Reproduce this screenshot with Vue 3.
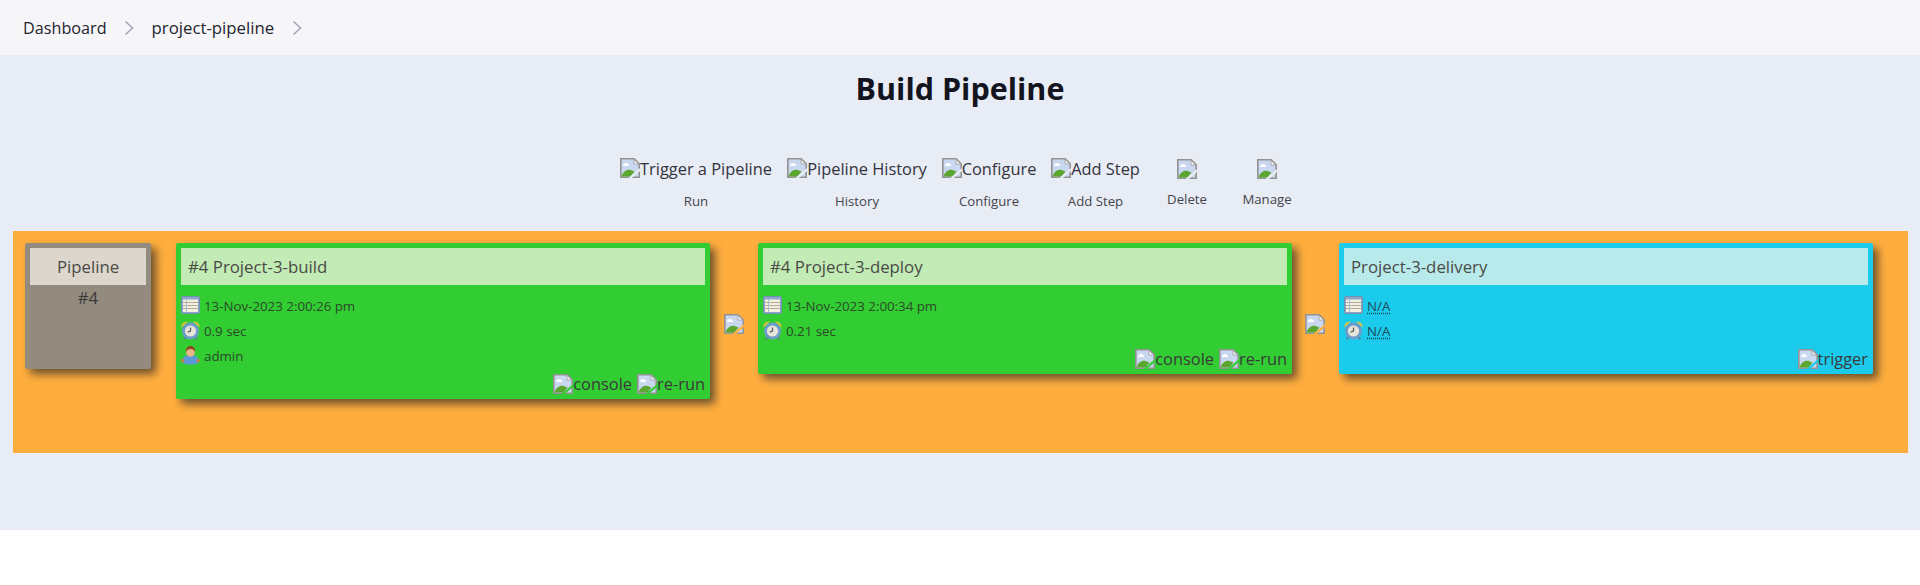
<script setup>
const tools = [
  { alt: 'Trigger a Pipeline', label: 'Run', cls: 'run' },
  { alt: 'Pipeline History', label: 'History', cls: 'history' },
  { alt: 'Configure', label: 'Configure', cls: 'configure' },
  { alt: 'Add Step', label: 'Add Step', cls: 'addstep' },
  { alt: '', label: 'Delete', cls: 'delete' },
  { alt: '', label: 'Manage', cls: 'manage' },
]
</script>

<template>
  <div class="page">
    <svg class="defs" width="0" height="0">
      <symbol id="broken" viewBox="0 0 20 20">
        <path d="M.8.8h13.400l5 5v13.400H.8z" fill="#c9d8f0" stroke="#939393" stroke-width="1.600" />
        <path d="M14 1.500v4.500h4.500z" fill="#fff" stroke="#a0a0a0" stroke-width=".9" />
        <path d="M3.500 6.500c1-2 4-2 5 0 1 .5 1 1.500 0 1.500h-5c-1 0-1-1 0-1.500z" fill="#fff" />
        <path d="M1.500 18.500c1.500-5 5.500-7.500 9-6.500l4 1.500-4 5z" fill="#5aa62e" />
        <path d="M9.500 20.500 20.500 11" stroke="var(--cut)" stroke-width="2.200" />
      </symbol>
      <symbol id="calendar" viewBox="0 0 19 19">
        <rect x=".5" y=".5" width="18" height="17" rx="1.500" fill="#8aa6cb" stroke="#7890b0" />
        <rect x="2" y="3.500" width="15" height="12.500" fill="#f3efe1" />
        <path d="M2 6.500h15M2 9.500h15M2 12.500h15" stroke="#b3ab98" stroke-width="1" />
        <path d="M5.500 3.500V16" stroke="#a9bcd6" />
      </symbol>
      <symbol id="clock" viewBox="0 0 19 19">
        <path d="M.3 6.500C.3 2.500 2.800.5 7 .5zM18.700 6.500c0-4-2.500-6-6.700-6z" fill="#e3c33a" />
        <path d="M4 16 3 18.500M15 16l1 2.500" stroke="#5f7f9f" stroke-width="2" />
        <circle cx="9.500" cy="10" r="8.500" fill="#6e9ccb" />
        <circle cx="9.500" cy="10" r="5.600" fill="#e6e6dc" />
        <path d="M9.500 6.500V10l-2.800 1.200" fill="none" stroke="#5c5c5c" stroke-width="1.300" />
      </symbol>
      <symbol id="user" viewBox="0 0 19 19">
        <path d="M1 15.500c0-4 3-6.500 8.500-6.500s8.500 2.500 8.500 6.500c0 1.800-2.500 3-8.500 3S1 17.300 1 15.500z" fill="#5c99d9" />
        <circle cx="1.800" cy="14.800" r="1.700" fill="#c2803f" />
        <circle cx="17.200" cy="14.800" r="1.700" fill="#c2803f" />
        <ellipse cx="9.500" cy="5.800" rx="4.500" ry="5" fill="#e9b48a" />
        <path d="M5 6C4.300 2.500 6.500 0 9.500 0S14.700 2.500 14 6c-1-2.300-2.300-3-4.500-3S6 3.700 5 6z" fill="#8a4a1f" />
      </symbol>
    </svg>

    <header class="topbar">
      <span class="crumb">Dashboard</span>
      <svg class="chev" viewBox="0 0 10 16"><path d="M1.500 1.500 8.500 8l-7 6.500" /></svg>
      <span class="crumb project">project-pipeline</span>
      <svg class="chev" viewBox="0 0 10 16"><path d="M1.500 1.500 8.500 8l-7 6.500" /></svg>
    </header>

    <main class="main">
      <h1 class="title">Build Pipeline</h1>

      <div class="toolbar">
        <div v-for="t in tools" :key="t.label" class="tool" :class="t.cls">
          <div class="tool-img">
            <svg class="img"><use href="#broken" /></svg><span v-if="t.alt">{{ t.alt }}</span>
          </div>
          <div class="tool-label">{{ t.label }}</div>
        </div>
      </div>

      <div class="pipeline">
        <div class="card grey head-card">
          <div class="card-head center">Pipeline</div>
          <div class="rev">#4</div>
        </div>

        <div class="card green">
          <div class="card-head">#4 Project-3-build</div>
          <div class="rows">
            <div class="row"><svg class="ico"><use href="#calendar" /></svg>13-Nov-2023 2:00:26 pm</div>
            <div class="row"><svg class="ico"><use href="#clock" /></svg>0.9 sec</div>
            <div class="row"><svg class="ico"><use href="#user" /></svg>admin</div>
          </div>
          <div class="actions">
            <span class="act"><svg class="img"><use href="#broken" /></svg>console</span>
            <span class="act"><svg class="img"><use href="#broken" /></svg>re-run</span>
          </div>
        </div>

        <svg class="img arrow"><use href="#broken" /></svg>

        <div class="card green">
          <div class="card-head">#4 Project-3-deploy</div>
          <div class="rows">
            <div class="row"><svg class="ico"><use href="#calendar" /></svg>13-Nov-2023 2:00:34 pm</div>
            <div class="row"><svg class="ico"><use href="#clock" /></svg>0.21 sec</div>
          </div>
          <div class="actions">
            <span class="act"><svg class="img"><use href="#broken" /></svg>console</span>
            <span class="act"><svg class="img"><use href="#broken" /></svg>re-run</span>
          </div>
        </div>

        <svg class="img arrow last"><use href="#broken" /></svg>

        <div class="card blue">
          <div class="card-head">Project-3-delivery</div>
          <div class="rows">
            <div class="row"><svg class="ico"><use href="#calendar" /></svg><a class="na">N/A</a></div>
            <div class="row"><svg class="ico"><use href="#clock" /></svg><a class="na">N/A</a></div>
          </div>
          <div class="actions">
            <span class="act"><svg class="img"><use href="#broken" /></svg>trigger</span>
          </div>
        </div>
      </div>
    </main>
  </div>
</template>

<style>
body {
  margin: 0;
  background: #fff;
}
</style>

<style scoped>
.page {
  font-family: "Open Sans", "Noto Sans", sans-serif;
  color: #14141f;
  --cut: #e8ecf4;
}
.defs {
  position: absolute;
}
.topbar {
  height: 55px;
  background: #f6f6f9;
  display: flex;
  align-items: center;
  padding-left: 23px;
  box-sizing: border-box;
}
.crumb {
  font-size: 16.200px;
  font-weight: 500;
  color: #24242e;
}
.crumb.project {
  font-size: 16.800px;
}
.chev {
  width: 10px;
  height: 16px;
  margin: 0 17.500px;
  fill: none;
  stroke: #a5a5b8;
  stroke-width: 1.500;
}
.main {
  background: #e8ecf4;
  height: 475px;
  overflow: hidden;
}
.title {
  margin: 12px 0 0;
  text-align: center;
  font-size: 30.500px;
  line-height: 42px;
  font-weight: 700;
}
.toolbar {
  margin-top: 47px;
  display: flex;
  justify-content: center;
  gap: 13px;
}
.tool {
  text-align: center;
  color: #33333d;
}
.run { width: 154px; }
.history { width: 142px; }
.configure { width: 96px; }
.addstep { width: 91px; }
.delete { width: 66px; margin-top: 1px; }
.manage { width: 68px; margin-top: 1px; }
.tool-img {
  display: flex;
  justify-content: center;
  align-items: center;
  height: 24px;
  font-size: 16.400px;
  white-space: nowrap;
}
.tool-label {
  margin-top: 12px;
  font-size: 13.200px;
  line-height: 18px;
  color: #44444e;
}
.delete .tool-label,
.manage .tool-label {
  margin-top: 9px;
}
.img {
  width: 20px;
  height: 20px;
  flex: none;
}
.pipeline {
  margin: 21px 12px 0 13px;
  height: 222px;
  background: #ffae3e;
  padding: 12px;
  box-sizing: border-box;
  display: flex;
  align-items: flex-start;
  gap: 14px;
  --cut: #ffae3e;
}
.card {
  width: 534px;
  padding: 5px;
  box-sizing: border-box;
  border-radius: 2px;
  box-shadow: 5px 5px 9px rgba(60, 50, 40, 0.75);
  flex: none;
  color: #3a3a3a;
}
.green {
  background: #32cd32;
  --cut: #32cd32;
}
.blue {
  background: #1acbeb;
  --cut: #1acbeb;
}
.grey {
  background: #948b7f;
}
.head-card {
  width: 126px;
  height: 126px;
  margin-right: 11px;
}
.card-head {
  height: 37px;
  line-height: 37px;
  padding-left: 7px;
  font-size: 16.800px;
  background: #c3ebb5;
  color: #4a4a46;
}
.blue .card-head {
  background: #b8eaeb;
}
.grey .card-head {
  background: #ddd6cd;
}
.card-head.center {
  padding-left: 0;
  text-align: center;
}
.rev {
  text-align: center;
  margin-top: 2px;
  font-size: 16.800px;
  line-height: 22px;
  color: #3a3a3a;
}
.rows {
  margin-top: 8px;
}
.row {
  height: 25px;
  display: flex;
  align-items: center;
  font-size: 13.300px;
  color: #2a4a2a;
}
.blue .row {
  color: #1f4a58;
}
.ico {
  width: 19px;
  height: 19px;
  margin-right: 4px;
  flex: none;
}
.na {
  text-decoration: underline dotted;
  text-underline-offset: 2px;
}
.actions {
  margin-top: 6px;
  height: 20px;
  display: flex;
  justify-content: flex-end;
  gap: 5px;
}
.act {
  display: flex;
  align-items: center;
  font-size: 16.400px;
  line-height: 20px;
}
.arrow {
  margin-top: 71px;
}
.arrow.last {
  margin-left: -1px;
}
</style>
